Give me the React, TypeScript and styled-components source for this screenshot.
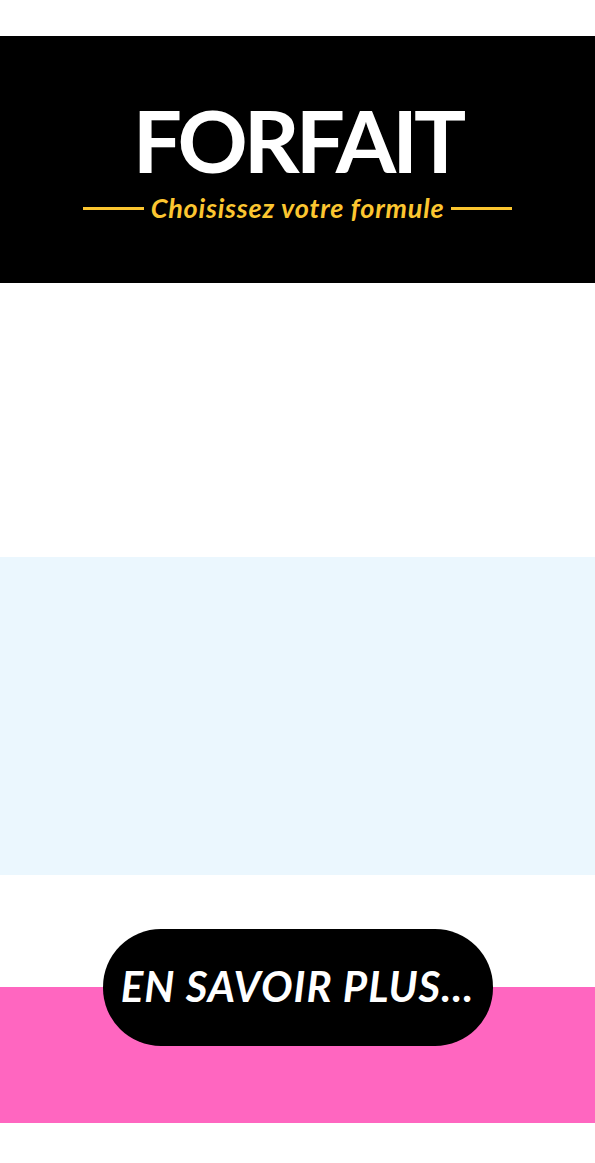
import React from "react";
import styled, { createGlobalStyle } from "styled-components";

const GlobalStyle = createGlobalStyle`
  html, body {
    margin: 0;
    padding: 0;
    background: #ffffff;
  }
  body {
    font-family: Lato, "Open Sans", "Liberation Sans", sans-serif;
  }
`;

const Page = styled.div`
  display: flex;
  flex-direction: column;
  width: 595px;
  padding-top: 36px;
  background: #ffffff;
`;

const Header = styled.header`
  height: 247px;
  box-sizing: border-box;
  background: #000000;
  padding-top: 60px;
  display: flex;
  flex-direction: column;
  align-items: center;
`;

const Title = styled.h1`
  margin: 0;
  font-family: Lato, "Open Sans", sans-serif;
  font-weight: 700;
  font-size: 87px;
  line-height: 1;
  letter-spacing: -4px;
  color: #ffffff;
`;

const SubtitleRow = styled.div`
  margin-top: 11px;
  display: flex;
  align-items: center;
  gap: 7px;
`;

const Rule = styled.span`
  display: block;
  width: 61px;
  height: 3px;
  background: #fcc630;
  margin-top: 2px;
`;

const Subtitle = styled.span`
  font-family: Lato, "Open Sans", sans-serif;
  font-style: italic;
  font-weight: 700;
  font-size: 27px;
  line-height: 1;
  letter-spacing: 0.8px;
  color: #fcc630;
`;

const Band = styled.section<{ $bg: string; $h: number }>`
  height: ${(p) => p.$h}px;
  background: ${(p) => p.$bg};
`;

const CtaSection = styled.section`
  height: 248px;
  box-sizing: border-box;
  padding-top: 54px;
  display: flex;
  justify-content: center;
  align-items: flex-start;
  background: linear-gradient(to bottom, #ffffff 0, #ffffff 112px, #ff66c0 112px, #ff66c0 100%);
`;

const CtaButton = styled.button`
  width: 390px;
  height: 117px;
  border: none;
  border-radius: 58px;
  background: #000000;
  color: #ffffff;
  font-family: Lato, "Open Sans", sans-serif;
  font-style: italic;
  font-weight: 700;
  font-size: 42px;
  letter-spacing: 1px;
  padding: 0 0 4px 0;
  cursor: pointer;
  white-space: nowrap;
`;

const BottomSpace = styled.div`
  height: 40px;
  background: #ffffff;
`;

export default function App() {
  return (
    <>
      <GlobalStyle />
      <Page>
        <Header>
          <Title>FORFAIT</Title>
          <SubtitleRow>
            <Rule />
            <Subtitle>Choisissez votre formule</Subtitle>
            <Rule />
          </SubtitleRow>
        </Header>
        <Band $bg="#ffffff" $h={274} />
        <Band $bg="#ebf7fe" $h={318} />
        <CtaSection>
          <CtaButton>EN SAVOIR PLUS...</CtaButton>
        </CtaSection>
        <BottomSpace />
      </Page>
    </>
  );
}
